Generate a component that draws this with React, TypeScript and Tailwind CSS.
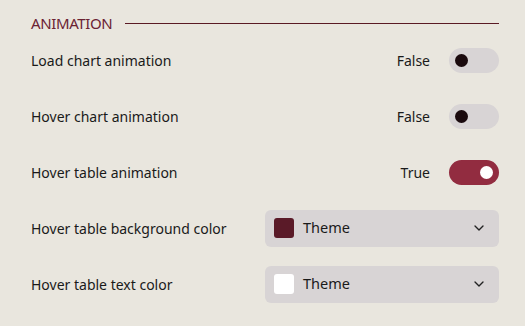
import React from 'react';
import { ChevronDown } from 'lucide-react';

const Toggle = ({ on }: { on: boolean }) => (
  <div
    className={`flex items-center w-[50px] h-[25px] rounded-full px-[6px] ${
      on ? 'bg-[#922c40] justify-end' : 'bg-[#d8d4d5] justify-start'
    }`}
  >
    <div className={`w-[13px] h-[13px] rounded-full ${on ? 'bg-white' : 'bg-[#1a0a0e]'}`}></div>
  </div>
);

const ToggleRow = ({ label, on }: { label: string; on: boolean }) => (
  <div className="flex items-center h-[56px]">
    <span className="flex-1">{label}</span>
    <span className="mr-[19px]">{on ? 'True' : 'False'}</span>
    <Toggle on={on} />
  </div>
);

const ColorRow = ({ label, swatch }: { label: string; swatch: string }) => (
  <div className="flex items-center h-[56px]">
    <span className="flex-1">{label}</span>
    <div className="flex items-center w-[234px] h-[37px] rounded-md bg-[#d8d4d5] pl-[9px] pr-[12px]">
      <div className={`w-[20px] h-[20px] rounded-[3px] ${swatch}`}></div>
      <span className="ml-[9px] flex-1 text-[14.5px]">Theme</span>
      <ChevronDown size={16} strokeWidth={2} className="text-[#222]" />
    </div>
  </div>
);

export default function App() {
  return (
    <div className="w-[525px] h-[326px] bg-[#e9e6de] px-[31px] pr-[26px] pt-[10px] text-[14px] text-[#1a1a1a] font-['Noto_Sans',sans-serif]">
      <div className="flex items-center h-[26px]">
        <span className="text-[15px] text-[#6b2233] tracking-tight">ANIMATION</span>
        <div className="flex-1 h-px bg-[#5a1a24] ml-[13px]"></div>
      </div>
      <div className="mt-[-4px]">
        <ToggleRow label="Load chart animation" on={false} />
        <ToggleRow label="Hover chart animation" on={false} />
        <ToggleRow label="Hover table animation" on={true} />
        <ColorRow label="Hover table background color" swatch="bg-[#5a1a28]" />
        <ColorRow label="Hover table text color" swatch="bg-white" />
      </div>
    </div>
  );
}
